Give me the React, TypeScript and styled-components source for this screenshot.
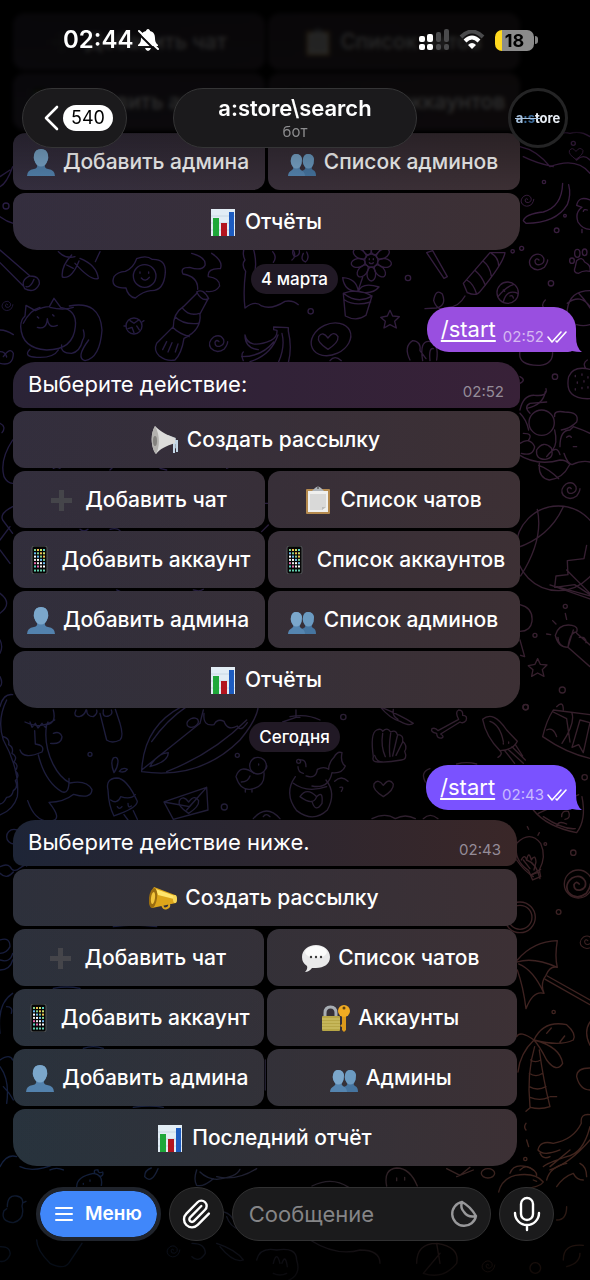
import React from 'react';
import styled, { createGlobalStyle } from 'styled-components';
import { Paperclip } from 'lucide-react';

const GlobalStyle = createGlobalStyle`
  *, *::before, *::after { box-sizing: border-box; }
  body { margin: 0; background: #000; }
  button, input { font: inherit; color: inherit; border: 0; padding: 0; margin: 0; }
  button { cursor: pointer; }
`;

const Screen = styled.div`
  position: relative;
  height: 100vh;
  overflow: hidden;
  display: flex;
  flex-direction: column;
  background: #000;
  color: #fff;
  font-family: Inter, "Liberation Sans", sans-serif;
  font-size: 21px;
  line-height: 28px;
`;

const WallpaperSvg = styled.svg`
  position: absolute;
  inset: 0;
  width: 100%;
  height: 100%;
`;

/* ---------- chat history ---------- */

const History = styled.main`
  position: relative;
  flex: 1;
  min-height: 0;
  display: flex;
  flex-direction: column;
  justify-content: flex-end;
  padding: 0 14px 114px 13px;
`;

const DatePill = styled.div`
  align-self: center;
  margin: 14px 0 13px;
  padding: 0 10px;
  border-radius: 15px;
  background: #211925;
  font-size: 17px;
  font-weight: 500;
  line-height: 30px;
`;

const Outgoing = styled.div<{ $color: string }>`
  position: relative;
  align-self: flex-end;
  display: flex;
  align-items: flex-end;
  gap: 7px;
  height: 45px;
  margin-bottom: 10px;
  padding: 0 9px 8px 14px;
  border-radius: 22px 22px 8px 22px;
  background: ${(p) => p.$color};
`;

const Tail = styled.svg`
  position: absolute;
  right: -6px;
  bottom: 0;
`;

const Command = styled.a`
  color: #fff;
  font-size: 22px;
  line-height: 30px;
  text-decoration: underline;
  text-decoration-thickness: 2px;
  text-underline-offset: 3px;
`;

const Stamp = styled.time<{ $out?: boolean }>`
  font-size: 15px;
  line-height: 15px;
  color: ${(p) => (p.$out ? 'rgba(255,255,255,.6)' : '#958c98')};
`;

const Receipt = styled.span`
  display: flex;
  align-items: flex-end;
  gap: 3px;
`;

const Bubble = styled.div<{ $width: number; $from: string; $to: string }>`
  display: flex;
  justify-content: space-between;
  align-items: flex-end;
  width: 100%;
  max-width: ${(p) => p.$width}px;
  height: 46px;
  margin-bottom: 3px;
  padding: 0 16px 9px 15px;
  border-radius: 22px 22px 10px 10px;
  background: linear-gradient(90deg, ${(p) => p.$from}, ${(p) => p.$to});
`;

const BubbleText = styled.p`
  margin: 0;
  align-self: flex-start;
  font-size: 22px;
  line-height: 44px;
`;

const Keyboard = styled.div<{ $width: number }>`
  display: grid;
  grid-template-columns: 1fr 1fr;
  gap: 3px;
  width: 100%;
  max-width: ${(p) => p.$width}px;
`;

const Key = styled.button<{ $wide?: boolean; $last?: boolean }>`
  grid-column: ${(p) => (p.$wide ? 'span 2' : 'auto')};
  display: flex;
  align-items: center;
  justify-content: center;
  gap: 8px;
  height: 57px;
  padding-right: 2px;
  border-radius: ${(p) => (p.$last ? '12px 12px 24px 24px' : '12px')};
  background:
    linear-gradient(90deg, rgba(61,48,52,0) 2%, #3d3034 92%) fixed,
    linear-gradient(180deg, #352e40 0, #322e3c 500px, #2d303b 900px, #27333d 1160px) fixed;
  font-weight: 500;
  white-space: nowrap;
`;

/* ---------- header ---------- */

const Header = styled.header`
  position: absolute;
  inset: 0 0 auto 0;
  padding-bottom: 44px;
  background: linear-gradient(180deg, rgba(0,0,0,.86) 0, rgba(0,0,0,.8) 131px, rgba(0,0,0,.3) 134px, rgba(0,0,0,0) 100%);

  &::before {
    content: "";
    position: absolute;
    inset: 0 0 60px 0;
    backdrop-filter: blur(2px);
  }
`;

const StatusBar = styled.div`
  position: relative;
  display: flex;
  align-items: center;
  justify-content: space-between;
  height: 80px;
  padding: 0 52px 0 63px;
`;

const StatusGroup = styled.div<{ $gap: number }>`
  display: flex;
  align-items: center;
  gap: ${(p) => p.$gap}px;
`;

const Clock = styled.time`
  font-size: 24px;
  font-weight: 600;
`;

const Battery = styled.span`
  display: flex;
  align-items: center;
  gap: 1px;

  &::after {
    content: "";
    width: 3px;
    height: 8px;
    border-radius: 0 3px 3px 0;
    background: #858585;
  }
`;

const BatteryLevel = styled.span`
  width: 39px;
  height: 21px;
  border-radius: 7px;
  background: linear-gradient(90deg, #ffd91f 7px, #8b8b8b 7px);
  color: #000;
  font-size: 18px;
  font-weight: 700;
  line-height: 21px;
  text-align: center;
`;

const NavBar = styled.nav`
  position: relative;
  display: grid;
  grid-template-columns: 1fr auto 1fr;
  align-items: center;
  margin-top: 8px;
  padding: 0 22px;
`;

const BackButton = styled.button`
  justify-self: start;
  display: flex;
  align-items: center;
  gap: 4px;
  height: 60px;
  padding: 0 13px 0 20px;
  border: 1px solid #353536;
  border-radius: 30px;
  background: #1b1a1c;
`;

const UnreadBadge = styled.span`
  padding: 0 8px;
  border-radius: 13px;
  background: #fff;
  color: #000;
  font-size: 18px;
  line-height: 26px;
`;

const TitleButton = styled.button`
  display: flex;
  flex-direction: column;
  align-items: center;
  width: 244px;
  height: 60px;
  padding-top: 6px;
  border: 1px solid #353536;
  border-radius: 30px;
  background: #1b1a1c;
`;

const Title = styled.span`
  font-size: 22px;
  font-weight: 600;
  line-height: 27px;
`;

const Subtitle = styled.span`
  color: #8d8d8f;
  font-size: 15px;
  line-height: 20px;
`;

const Avatar = styled.button`
  position: relative;
  justify-self: end;
  display: flex;
  align-items: center;
  justify-content: center;
  width: 60px;
  height: 60px;
  border: 3px solid #242425;
  border-radius: 50%;
  background: #000;
  font-size: 13px;
  font-weight: 700;

  &::after {
    content: "";
    position: absolute;
    left: 4px;
    top: 27px;
    width: 25px;
    height: 1px;
    background: #a9c4e0;
  }
`;

const AvatarTint = styled.span<{ $color: string }>`
  color: ${(p) => p.$color};
`;

/* ---------- composer ---------- */

const Composer = styled.form`
  position: absolute;
  inset: auto 0 0 0;
  display: flex;
  gap: 8px;
  padding: 20px 36px 39px;
  background: linear-gradient(180deg, rgba(0,0,0,0), rgba(0,0,0,.75));
`;

const MenuButton = styled.button`
  display: flex;
  align-items: center;
  gap: 12px;
  height: 54px;
  padding: 0 15px;
  border: 4px solid #20242c;
  border-radius: 27px;
  background: #4087fa;
  background-clip: padding-box;
  font-size: 19px;
  font-weight: 600;
`;

const RoundButton = styled.button`
  flex: none;
  display: flex;
  align-items: center;
  justify-content: center;
  width: 55px;
  height: 54px;
  border: 1px solid #313132;
  border-radius: 27px;
  background: #1b1b1c;
`;

const Field = styled.div`
  flex: 1;
  min-width: 0;
  display: flex;
  align-items: center;
  height: 54px;
  padding: 0 12px 0 16px;
  border: 1px solid #313132;
  border-radius: 27px;
  background: #1b1b1c;
`;

const MessageInput = styled.input`
  flex: 1;
  min-width: 0;
  background: none;
  outline: none;
  font-size: 22px;

  &::placeholder { color: #858587; opacity: 1; }
`;

const StickerButton = styled.button`
  display: flex;
  background: none;
`;

/* ---------- emoji ---------- */

type EmojiName = 'loud' | 'horn' | 'plus' | 'board' | 'phone' | 'bust' | 'busts' | 'chart' | 'speech' | 'lock';

const PHONE_DOTS = ['#7fd08a', '#e8e8e8', '#c7e06a', '#6ab8f0', '#e46ab0', '#f0c050', '#fff', '#5ad0c0'];

const emojiArt: Record<EmojiName, React.ReactNode> = {
  loud: (
    <>
      <path d="M17 9 L25 12 V22 L22 24 V17 L17 18Z" fill="#a9b3bb" />
      <path d="M22 14 H27 V26 H25 V18 H24 V27 H22Z" fill="#c3d6e6" />
      <path d="M4 0 C8 4 13 8 24 12 V17 C15 20 9 23 5 28 C0 22 -1 8 4 0Z" fill="#dcdcda" />
      <path d="M4 0 C9 8 9 21 5 28 C0 22 -1 8 4 0Z" fill="#b3b1ae" />
      <ellipse cx="4" cy="15" rx="2" ry="5" fill="#83817e" />
    </>
  ),
  horn: (
    <>
      <path d="M13 20 q1 6 5 4 q3 -1 2 -4" fill="none" stroke="#d9a520" strokeWidth="2" />
      <path d="M5 3 L26 11 Q29 15 27 19 L3 24 Q-2 13 5 3Z" fill="#dda61a" />
      <path d="M7 5 L26 12 L25 15 L9 11Z" fill="#ffe56b" />
      <ellipse cx="4" cy="14" rx="4" ry="10" transform="rotate(8 4 14)" fill="#9a6d10" />
      <ellipse cx="4" cy="14" rx="2" ry="6" transform="rotate(8 4 14)" fill="#f2c53a" />
      <ellipse cx="26" cy="15" rx="2" ry="4" fill="#f8d85a" />
    </>
  ),
  plus: <path d="M10 4 h5 v8 h8 v5 h-8 v8 h-5 v-8 h-8 v-5 h8Z" fill="#45454a" />,
  board: (
    <>
      <rect x="2" y="3" width="24" height="25" rx="1" fill="#b58a4e" />
      <rect x="4" y="5" width="20" height="21" fill="#f0f0ee" />
      <path d="M6 8 H22 V21 L18 24 H6Z" fill="#d9d9d8" />
      <path d="M18 24 V21 H22Z" fill="#bcbcba" />
      <path d="M8 5 L11 2 Q14 -1 17 2 L20 5Z" fill="#aeb4ba" />
      <circle cx="14" cy="2" r="1" fill="#5a5a5a" />
    </>
  ),
  phone: (
    <>
      <rect x="6" y="0" width="15" height="28" rx="2" fill="#060606" stroke="#55585a" strokeWidth="1" />
      {[0, 1, 2, 3, 4, 5].map((r) =>
        [0, 1, 2, 3].map((c) => (
          <rect key={`${r}-${c}`} x={8 + c * 3} y={3 + r * 3.3} width="2" height="2" fill={PHONE_DOTS[(r * 3 + c * 5) % 8]} />
        )),
      )}
      <path d="M8 24.5 h11" stroke="#63cfae" strokeWidth="2" strokeDasharray="2 1" />
    </>
  ),
  bust: (
    <>
      <path d="M0 28 Q0 22 7 21 Q11 20 10 17 Q6 12 7 7 Q8 1 14 1 Q20 1 21 7 Q22 12 18 17 Q17 20 21 21 Q28 22 28 28Z" fill="#5382ad" />
      <path d="M10 17 Q6 12 7 7 Q8 1 14 1 Q20 1 21 7 Q22 12 18 17 Q14 20 10 17Z" fill="#7ba7cb" />
    </>
  ),
  busts: (
    <>
      <path d="M11 28 Q12 23 16 22 Q18 21 17 19 Q14 15 15 11 Q16 6 20 6 Q25 6 26 11 Q26 16 24 19 Q23 21 25 22 Q28 23 28 28Z" fill="#4675a0" />
      <path d="M17 19 Q14 15 15 11 Q16 6 20 6 Q25 6 26 11 Q26 16 24 19 Q20 22 17 19Z" fill="#6c9bc1" />
      <path d="M0 28 Q0 24 4 22 Q6 21 5 19 Q2 15 3 11 Q4 6 8 6 Q13 6 14 11 Q14 16 12 19 Q11 21 13 22 Q17 24 17 28Z" fill="#5585b0" />
      <path d="M5 19 Q2 15 3 11 Q4 6 8 6 Q13 6 14 11 Q14 16 12 19 Q8 22 5 19Z" fill="#7ba7cb" />
    </>
  ),
  chart: (
    <>
      <rect x="2" y="1" width="24" height="27" fill="#e2edf5" />
      <path d="M2 8 H26 M2 15 H26 M2 22 H26" stroke="#c8d8e4" strokeWidth="1" />
      <rect x="4" y="10" width="6" height="18" fill="#1fa83a" />
      <rect x="12" y="15" width="6" height="13" fill="#b3151f" />
      <rect x="20" y="4" width="5" height="24" fill="#1d5cc0" />
    </>
  ),
  speech: (
    <>
      <path d="M14 1 C22 1 28 6 28 13 C28 20 22 24 14 24 C12 24 11 24 10 24 Q7 28 3 28 Q6 25 5 22 Q0 19 0 13 C0 6 6 1 14 1Z" fill="#e9e9ea" />
      <ellipse cx="14" cy="8" rx="11" ry="6" fill="#fbfbfb" />
      <circle cx="9" cy="13" r="1.2" fill="#3b3b3b" />
      <circle cx="14" cy="13" r="1.2" fill="#3b3b3b" />
      <circle cx="19" cy="13" r="1.2" fill="#3b3b3b" />
    </>
  ),
  lock: (
    <>
      <path d="M3 13 V9 Q3 3 8.500 3 Q14 3 14 9 V13" fill="none" stroke="#a7adb3" strokeWidth="3" />
      <rect x="0" y="12" width="18" height="15" rx="1" fill="#b7a646" />
      <path d="M0 15 H18 M0 18 H18 M0 21 H18 M0 24 H18" stroke="#d4c76e" strokeWidth="1" />
      <path d="M20 11 H24 V26 L22 28 L20 26 V23 L18 22 L20 20Z" fill="#dc9a1b" />
      <circle cx="22" cy="7" r="6" fill="#f0ab22" />
      <circle cx="22" cy="4" r="1.5" fill="#5c4211" />
    </>
  ),
};

const Emoji = ({ name }: { name: EmojiName }) => (
  <svg width="28" height="28" viewBox="0 0 28 28" aria-hidden="true">
    {emojiArt[name]}
  </svg>
);

/* ---------- wallpaper doodles ---------- */

const Spiral = ({ x, y, s = 1 }: { x: number; y: number; s?: number }) => (
  <path
    transform={`translate(${x} ${y}) scale(${s})`}
    d="M2 0 q-8 -8 -12 2 q0 14 14 12 q16 -4 12 -20 q-10 -18 -30 -8 q-20 16 -8 34 q18 18 40 2 q10 -14 10 -22"
  />
);
const Heart = ({ x, y, s = 1 }: { x: number; y: number; s?: number }) => (
  <path transform={`translate(${x} ${y}) scale(${s})`} d="M0 26 Q-34 4 -28 -12 Q-16 -30 0 -8 Q18 -32 30 -12 Q32 6 0 26Z" />
);
const Star = ({ x, y }: { x: number; y: number }) => (
  <path transform={`translate(${x} ${y})`} d="M0 -27 L8 -10 L28 -8 L14 6 L19 26 L0 16 L-18 26 L-14 6 L-28 -6 L-8 -10Z" />
);
const Dots = ({ at }: { at: number[][] }) => (
  <>
    {at.map(([x, y, r = 8]) => (
      <circle key={`${x},${y}`} cx={x} cy={y} r={r} />
    ))}
  </>
);

const Wallpaper = () => (
  <WallpaperSvg viewBox="0 0 590 1280" preserveAspectRatio="xMidYMid slice" aria-hidden="true">
    <defs>
      <linearGradient id="cool" gradientUnits="userSpaceOnUse" x1="0" y1="0" x2="0" y2="1280">
        <stop offset="0" stopColor="#2c1c44" />
        <stop offset=".3" stopColor="#241c42" />
        <stop offset=".6" stopColor="#1d1d3c" />
        <stop offset=".8" stopColor="#151d3c" />
        <stop offset="1" stopColor="#12233f" />
      </linearGradient>
      <linearGradient id="warm" gradientUnits="userSpaceOnUse" x1="0" y1="0" x2="0" y2="1280">
        <stop offset="0" stopColor="#3c1c48" />
        <stop offset=".3" stopColor="#361f38" />
        <stop offset=".6" stopColor="#36202a" />
        <stop offset=".8" stopColor="#40231f" />
        <stop offset="1" stopColor="#42261c" />
      </linearGradient>
      <linearGradient id="fade" x1="0" y1="0" x2="1" y2="0">
        <stop offset=".2" stopColor="#000" />
        <stop offset=".9" stopColor="#fff" />
      </linearGradient>
      <mask id="right" maskUnits="userSpaceOnUse" x="0" y="0" width="590" height="1280">
        <rect width="590" height="1280" fill="url(#fade)" />
      </mask>
      <mask id="lines" maskUnits="userSpaceOnUse" x="0" y="0" width="590" height="1280">
        <g fill="none" stroke="#fff" strokeWidth="4" strokeLinecap="round" strokeLinejoin="round">
          <g transform="translate(290 0) scale(.3333)">
            <path d="M690 440 Q740 450 780 500 Q860 470 900 520 M700 470 Q740 490 790 500 M800 420 q10 -30 40 -20 q30 -10 60 10 M860 480 q20 -20 40 0" />
            <Heart x={858} y={460} s={0.7} />
            <Dots at={[[762, 546, 5], [850, 430, 6]]} />
          </g>
          <g transform="translate(0 190) scale(.3333)">
            <path d="M0 -40 L30 -60 M0 -10 q20 -10 38 -60 M0 80 q20 15 40 20 M0 180 L90 258 M0 218 L70 288 M90 258 q30 0 28 24 q-14 30 -44 14 q-14 -26 16 -38 M78 290 q14 4 24 -22" />
            <circle cx="18" cy="48" r="9" />
            <path d="M215 195 q-32 34 -28 66 q28 8 50 -48 M240 205 q50 20 55 60 q-20 10 -70 -45 M175 185 q20 22 50 15 M200 225 l20 10 M300 185 l-14 30" />
            <path d="M410 206 q30 -12 46 2 q42 -2 40 40 q-4 56 -44 54 q-22 2 -46 22 q-22 -4 -28 -30 q-50 0 -36 -34 q10 -14 34 -16 q24 -10 34 -38z" />
            <circle cx="434" cy="258" r="34" />
            <path d="M420 246 v4 M446 246 v4 M424 264 q12 14 24 -2" />
            <path d="M592 308 L550 350 Q520 370 520 410 L470 460 Q460 482 478 498 Q500 515 525 510 Q545 490 552 445 Q605 420 600 372 L625 325 M590 306 q20 -12 36 20 q-20 10 -36 -20 M548 355 q20 25 50 15 M525 380 q25 25 70 20 M518 412 q20 20 50 28 M500 455 l-12 24 M516 458 l-12 28 M534 462 l-8 24" />
            <path d="M575 190 q45 12 40 36 q-10 18 -46 6 q-30 0 -20 20 q46 8 44 46 M635 190 q36 24 26 46 q-40 -2 -36 24 q34 4 34 28 q-12 20 -40 16" />
            <path d="M735 170 q-10 20 0 40 q-12 14 2 34 q-8 60 -2 110 q30 -24 50 -6 q30 12 70 -14 q24 -4 40 10 M760 175 q14 50 0 90 M818 185 q14 16 2 32 M880 180 q10 20 -4 30" />
            <path d="M75 378 L78 346 L106 362 Q130 350 148 350 L162 325 L182 352 Q232 360 226 410 Q220 480 140 480 Q65 475 62 410 Q62 390 75 378 M208 348 Q300 330 306 420 Q300 504 255 512 Q226 504 266 450 M90 478 Q68 500 110 502 Q160 505 175 480 M185 465 Q180 490 215 490 Q240 485 248 450 Q256 440 250 420" />
            <path d="M112 412 q28 8 30 -26 q4 32 30 20 M112 380 l4 4 M158 374 l4 4 M70 400 q20 -40 50 -48 M150 352 q40 10 70 0" />
            <circle cx="402" cy="408" r="24" />
            <path d="M390 392 l12 8 l14 -10 M384 416 l12 -4 l6 16 M418 420 l-8 -12 M372 408 h6 M426 396 l6 -4" />
            <Spiral x={655} y={455} />
            <Spiral x={22} y={344} s={0.6} />
            <path d="M0 420 q20 0 40 14 M10 500 q20 -30 30 -10 q0 40 -40 30 M0 485 q16 0 20 16" />
            <path d="M735 435 q10 45 78 16 q20 -10 18 -30 l-10 -2 v-8 l44 2 v10 q12 50 0 96 M735 435 q0 40 40 44 M725 500 q60 0 96 -44 M730 512 q-8 -20 0 -26 M750 515 q64 -20 84 -80 M846 430 q10 40 -10 85" />
          </g>
          <g transform="translate(290 190) scale(.3333)">
            <circle cx="244" cy="212" r="20" />
            {[0, 40, 80, 120, 160, 200, 240, 280, 320].map((a) => (
              <ellipse key={a} cx="244" cy="172" rx="13" ry="21" transform={`rotate(${a + 20} 244 212)`} />
            ))}
            <path d="M238 206 v3 M250 206 v3 M238 218 q6 6 12 0 M160 310 L166 378 Q200 396 228 376 L246 318 M160 310 q44 -16 86 8 q-44 26 -86 -8 M164 330 q30 20 78 6 M205 305 q-5 -40 -47 -42 q5 42 47 42 q10 -30 62 -14 q-20 24 -62 14 M205 300 L218 262" />
            <path d="M15 170 q-14 20 0 30 q20 -4 10 -30 M40 190 q-10 20 6 26 q14 -10 4 -30" />
            <Star x={300} y={388} />
            <ellipse cx="123" cy="448" rx="62" ry="46" transform="rotate(-25 123 448)" />
            <Heart x={114} y={452} />
            <path d="M120 512 q14 -18 34 0" />
            <path d="M410 188 L462 265 L472 260 L428 182 Z" />
            <path d="M520 280 L600 188 L645 188 Q640 220 570 305 Q560 320 532 308 Z M530 270 q20 10 30 42 M556 242 q20 16 30 44 M580 214 q20 16 24 44 M604 190 q20 10 22 36 M525 318 q-18 32 -50 34 q-32 16 -44 -20 q6 -38 26 -20 q14 34 -18 42 l-34 2" />
            <circle cx="653" cy="308" r="32" />
            <path d="M624 320 q24 -30 46 -36 M640 336 q10 -40 44 -26 M640 300 l4 4 M660 318 q8 -4 10 6" />
            <Spiral x={712} y={28} s={0.7} />
            <Spiral x={745} y={210} />
            <path d="M700 92 q6 -20 60 -26 q56 -16 58 -86 M708 100 q90 0 124 -56 q12 -30 4 -60 M700 92 l8 8" />
            <path d="M900 30 q-34 -14 -40 16 l16 6 q-22 16 -12 44 q14 22 36 22 M876 118 v10 M892 60 q-10 -4 -12 4" />
            <Dots at={[[800, 121, 7], [783, 280, 8], [354, 264, 8], [62, 364, 8], [825, 77, 4], [695, 175, 6], [795, 560, 8], [668, 184, 5]]} />
            <ellipse cx="862" cy="190" rx="8" ry="12" />
            <ellipse cx="884" cy="187" rx="7" ry="10" />
            <ellipse cx="846" cy="212" rx="7" ry="8" />
            <path d="M860 212 q16 -14 24 4 q20 10 16 28 q-20 -4 -34 6 q-18 0 -10 -20 z" />
            <path d="M900 302 q-60 0 -68 56 q-4 30 10 46 M832 340 q40 -30 68 10 M860 404 q20 6 40 0 M866 310 q20 20 34 44 M766 330 q-20 20 10 34" />
            <path d="M360 510 q-20 -40 8 -58 q26 2 22 30 l18 24 M398 512 q-10 -60 20 -58 q30 6 22 56 M420 512 q-4 -40 10 -36" />
            <path d="M690 484 q-8 44 60 42 q38 -4 38 -38 M892 510 q-16 10 -4 26 M836 560 q14 -34 64 -22 M836 560 q-14 70 64 66" />
            <path d="M856 556 v4 M876 552 v4 M862 576 v4 M882 572 v4 M856 596 v4 M876 592 v4 M894 590 v4 M894 560 v4" />
            <path d="M690 560 q20 10 0 20 M690 660 q10 -46 44 -44 q40 4 34 -20 M710 655 q50 -10 56 -50" />
          </g>
          <g transform="translate(260 400) scale(.3333)">
            <circle cx="845" cy="68" r="38" />
            <path d="M810 40 q-20 -20 0 -30 l50 -4 M780 40 q20 20 26 50 M884 50 q-4 -20 30 -14 q46 0 36 30 q-20 20 -46 24 M780 130 q30 -20 44 10 q-4 30 -40 20 M830 150 q20 -30 44 -6 q10 30 -18 34 q-30 0 -26 -28 M860 170 q30 -40 40 -6 M790 100 q30 0 16 20 M884 90 q10 40 -6 60" />
            <path d="M900 140 q0 -50 30 -50 l10 -10 q30 10 50 20 M912 160 q10 30 24 34 q30 -14 54 -8 M920 112 q10 -8 14 0 M940 140 h10 M770 160 q60 40 130 20 q20 0 30 14 M838 190 q-4 44 30 50 q40 -4 60 -44 M836 196 q30 10 60 40" />
            <Spiral x={932} y={266} />
            <circle cx="895" cy="445" r="127" />
            <path d="M832 328 q20 90 -50 200 M910 320 q-40 90 -140 124 M980 436 l-8 40 l-50 6 l2 42 l-36 4 l-4 34 l60 -8 l46 30 M890 560 l100 28 M870 555 l120 42 M920 510 l70 70" />
            <path d="M780 614 q40 10 36 50 q-4 30 -36 30 M780 720 l14 50 l-12 -4 M894 712 q0 30 30 30 L990 800 M924 742 L940 690 M886 706 q10 -36 50 -30 q20 4 14 20 q-20 0 -26 46 q-30 0 -38 -36 M950 700 L990 735 M958 712 q20 -4 20 16 M878 662 l10 10 M916 640 l4 18 M860 702 l12 2" />
            <Star x={833} y={803} />
            <Dots at={[[916, 619, 6], [825, 706, 6], [907, 870, 9], [797, 922, 8]]} />
          </g>
          <g transform="translate(0 400) scale(.3333)">
            <path d="M0 70 q20 10 6 28 M38 120 q-40 60 -26 110 q10 20 26 20 M38 320 q-40 20 -30 40 L38 400 M0 420 L30 380 M0 450 l30 40 M0 580 q40 30 0 60 M0 720 q10 20 0 40 M0 830 q10 20 0 30 M0 920 q10 -40 38 -36" />
            <path d="M160 205 q10 -6 20 0 M240 388 q12 10 24 0 M330 210 l10 -10 M480 205 l20 5 M785 395 l20 -20 M330 388 q20 -6 30 4 M350 570 l10 4 M580 570 q20 6 30 -2 M790 310 h14 M680 205 l20 -10" />
          </g>
          <g transform="translate(0 700) scale(.3333)">
            <path d="M20 0 Q-10 60 10 120 Q60 210 52 290 Q40 330 0 345 M75 66 Q120 90 164 60 M90 66 l6 16 l10 -12 l8 14 l12 -14 l10 12 l8 -16 M160 30 q10 40 -20 44 q-10 60 20 120 q20 40 50 55 q50 -10 66 20 q-2 30 -55 14 q-30 24 -74 24 q40 50 10 55 q-50 10 -74 -60 M60 150 q10 30 66 6 q10 -20 -20 -24 l-2 -40 M160 100 q20 -8 26 10 q-2 24 -34 20 M115 165 q20 80 70 110 q24 10 22 -40 M10 110 q20 6 16 24 q16 8 10 26 q18 10 6 26 q16 10 4 26 q16 14 0 30 q10 20 -6 30 q-4 20 -20 20 q-10 20 -20 20" />
            <path d="M228 30 q-10 20 10 20 q16 -4 20 -20 M260 30 q0 20 20 20 q14 -10 10 -20 M310 30 q-4 24 16 18 q14 -6 8 -18 M300 40 l20 80 q16 12 40 0 q12 -10 0 -50 l-14 -42" />
            <path d="M425 215 Q430 80 545 20 M425 215 Q600 240 720 120 Q770 60 775 20 M425 210 L600 70 L610 30 M500 215 Q640 160 740 60 M455 125 Q500 60 560 20 M450 200 q20 -40 55 -42 q0 26 -55 42" />
            <ellipse cx="578" cy="68" rx="18" ry="13" transform="rotate(-25 578 68)" />
            <path d="M612 40 q-4 40 30 34 q10 -20 30 -10 q10 30 40 14 q10 20 30 -10" />
            <path d="M340 174 q12 -6 14 8 q0 20 -12 36 q-12 -30 -2 -44 M358 214 q10 -14 24 -6 q-8 12 -24 6 M324 270 q-8 -34 26 -36 q30 0 62 70 q0 20 -70 44 q-16 -30 -18 -78 M332 300 q20 14 30 -10 q30 10 44 -6 M372 344 l12 16 M400 332 l12 26 M352 320 q6 10 14 0 M384 310 q0 16 10 8" />
            <path d="M492 306 L620 262 L624 330 L520 358 Z M492 306 L568 320 L620 262 M620 262 L560 330" />
            <Heart x={566} y={314} />
            <circle cx="774" cy="197" r="25" />
            <path d="M762 220 Q720 190 708 230 Q720 270 750 268 Q796 262 792 218 M724 246 q20 0 26 -18 M776 192 v3 M796 208 q6 -4 4 -12 M736 268 v8 M756 268 v8" />
            <path d="M760 356 q40 -46 80 0 M790 350 q8 -12 20 0 M848 66 l40 -14 h12 M888 30 v20" />
            <Dots at={[[270, 163, 6], [673, 321, 9], [712, 166, 6], [896, 184, 6], [42, 410, 22]]} />
            <path d="M0 500 q20 -10 30 0 q10 20 30 4 q20 -14 20 -6 M0 520 q20 20 40 -4" />
          </g>
          <g transform="translate(290 700) scale(.3333)">
            <Dots at={[[160, 51], [707, 21], [884, 232], [850, 458], [766, 432, 4]]} />
            <path d="M0 50 q50 -10 90 10 M270 20 q70 30 100 50 q-10 10 -40 -6 q-30 -8 -60 -44 M310 28 q-4 20 14 30" />
            <path d="M250 170 q-10 -70 10 -80 q14 -6 18 4 q14 -14 24 2 q16 -8 20 8 q20 0 16 20 q16 14 6 30 q10 24 -10 26 q-40 8 -70 6 q-20 0 -14 -16 M278 100 q-6 40 8 70 M302 100 q-6 40 -2 70 M322 108 l-14 60 M338 126 l-20 40 M254 166 q6 20 24 20" />
            <path d="M444 92 L506 58 Q494 36 506 30 Q520 30 518 46 Q534 46 528 62 Q520 72 510 66 L452 102 Q464 110 456 114 Q440 116 440 100 Q420 96 426 86 Q436 82 444 92" />
            <path d="M578 58 Q610 30 650 90 L682 124 Q670 150 630 152 Q588 110 578 58 M600 64 q30 10 40 60 M630 152 q10 10 -6 20 M644 152 l30 38 M654 148 l46 42 M666 140 l40 40 M676 134 l22 34 M640 128 v4 M656 126 v4" />
            <path d="M758 110 Q770 60 790 30 L900 44 M758 110 Q830 160 900 175 M800 20 q20 -20 20 10 M846 40 q10 30 -30 90 M790 36 l40 20 l10 70 M770 90 q20 -10 30 20 M870 60 l30 8 l-20 90 l-14 -24 l-20 8 z" />
            <path d="M28 180 q20 -4 20 20 M24 200 q0 16 16 20 M48 228 q30 10 34 -20 q20 -10 34 0 q0 -20 16 -36 q10 -20 24 -14 q-6 30 10 40 q-10 24 -40 20 q-10 50 -60 40 M134 244 q20 -20 40 0 M150 262 q14 -4 4 12" />
            <path d="M16 230 Q-20 280 20 332 Q70 370 112 330 Q140 280 108 240 M10 250 q40 30 100 10 M30 290 q20 -30 50 0 q-10 30 -50 0 M80 290 q20 -20 16 20 q-20 30 -30 -6" />
            <Heart x={280} y={264} />
            <path d="M406 246 q-16 -30 14 -40 M500 192 q30 -8 60 0 M246 356 q40 -20 70 0 q30 -16 60 0 M400 356 q20 -20 44 0" />
            <path d="M730 330 Q770 380 860 398 Q890 360 876 290 M745 340 L866 284 M760 350 q60 40 96 36 M815 350 q0 -20 20 -16 q10 20 -10 24 M800 380 q4 -20 30 -8" />
            <path d="M680 430 Q720 390 752 430 Q770 470 748 510 L752 530 L728 540 L716 512 Q670 480 680 430 M700 480 l20 26 M694 480 q10 -20 16 0 q6 -30 14 0 q12 -20 14 6 l-6 24 M712 380 l4 8 M748 398 l-4 8 M664 390 l6 6 M724 524 l26 -8" />
          </g>
          <g transform="translate(260 860) scale(.3333)">
            <path d="M770 0 q20 30 50 50 M812 46 l30 -18 M800 0 q30 10 40 56" />
            <Spiral x={955} y={72} s={1.3} />
            <circle cx="955" cy="72" r="42" />
            <circle cx="780" cy="172" r="36" />
            <circle cx="780" cy="172" r="46" />
            <Spiral x={982} y={242} s={0.8} />
            <path d="M772 300 Q820 244 892 242 Q884 290 892 322 Q870 316 858 346 Q840 370 852 400 Q820 390 798 446 Q790 380 772 330 M892 322 Q820 290 772 306 M852 400 Q820 330 776 312 M862 348 L990 420 M856 358 L990 434" />
            <Dots at={[[896, 156, 7], [881, 456, 5], [796, 897, 5]]} />
            <path d="M822 540 Q850 480 920 494 Q950 520 940 540 Q900 560 822 540 Q900 560 908 610 Q890 640 860 600 Q840 560 822 540 Q780 580 774 636 M822 540 Q780 510 770 530 M824 560 Q800 640 810 740 M838 570 Q850 660 870 740 Q840 750 812 742 M812 600 q14 10 30 0 M808 640 q20 14 40 0 M808 680 q24 14 50 0 M810 712 q30 12 56 0 M870 710 h20 M812 742 l-14 12 M860 520 l14 -16 M900 546 l14 -18" />
            <path d="M990 486 q-20 30 0 70 M990 624 q-40 0 -40 26 q10 40 40 40 M798 790 q-8 10 0 20 M800 840 l6 20" />
            <path d="M990 764 Q960 760 964 790 Q940 840 880 850 Q840 840 834 870 Q850 890 900 870 M990 800 Q970 880 920 890 Q860 910 850 920 M990 840 q-60 70 -120 90 M840 880 q10 20 30 10 M930 870 l-60 50 M780 930 q20 -20 40 0" />
          </g>
          <g transform="translate(0 860) scale(.3333)">
            <path d="M0 240 q30 -10 30 20 q-10 20 -30 20 M0 300 q30 10 38 -20 M0 330 q30 0 38 -30 M38 400 Q-10 430 0 520 M20 440 q20 0 14 20 M0 600 q30 -20 38 0 M0 620 q30 40 20 110 M10 680 q20 20 30 40 M0 920 q20 -40 50 -30 M150 930 q20 -10 40 0 M340 200 q60 -10 130 0 M160 385 q40 -8 80 0 M250 565 q30 -10 60 0 M400 742 q50 -8 90 0 M790 250 v80 M796 600 v90" />
          </g>
          <g transform="translate(0 1160) scale(.3333)">
            <path d="M60 20 q40 20 110 -10 M434 50 q0 -20 20 -26 M434 50 q20 24 40 -24 M590 30 q-10 30 0 46 q20 6 50 -20 M600 36 q20 20 50 22 q60 -6 70 -30 M650 50 q60 14 120 -24 M230 80 q0 -30 50 -40 q30 4 24 36 M270 60 v4 M250 70 v3 M284 38 q-4 -10 10 -8 q0 12 14 6 q4 12 -10 14" />
            <path d="M22 140 q0 -36 28 -32 q24 4 16 30 q10 40 -26 50 q-40 -4 -28 -36 l8 -6 M70 128 l8 -4 M110 240 q0 30 40 70 q40 20 56 0 l40 -60 M0 260 q34 0 30 24 q-10 24 -30 20" />
            <Spiral x={520} y={270} s={0.7} />
            <path d="M576 250 q40 0 40 30 q-20 30 -40 10 M650 250 q60 20 80 50 q-30 10 -70 -40 M770 300 q10 -40 60 -30 q60 -10 60 30 q20 60 -60 70 M820 310 q10 -40 20 0 M846 310 q10 -30 16 10 M820 340 q20 10 40 0 M640 160 q50 -20 70 40 M680 170 q10 30 40 40" />
          </g>
          <g transform="translate(290 1160) scale(.3333)">
            <path d="M66 78 q60 -30 110 4 M290 78 q-10 -50 30 -54 q40 0 62 54 M320 54 v8 M344 52 v8 M470 26 l40 20 l30 -24 M500 50 l50 -20 M660 40 q10 -30 50 -20 q30 10 30 26 M626 96 q10 -40 50 -50 q60 -10 84 20 q-10 16 -60 20 M770 60 q10 -40 60 -50 M800 80 q20 -30 50 -40 q10 20 30 20 M870 10 q20 10 20 40 M730 60 l10 4" />
            <ellipse cx="594" cy="40" rx="20" ry="14" />
            <path d="M60 240 q80 50 150 30 q60 0 60 40 M380 310 q0 -60 60 -60 q70 10 60 60 q-40 50 -100 30 M400 340 l50 -60 M440 250 l10 60 M800 180 q30 0 30 -40 M820 300 q0 -50 60 -44 M830 320 q40 -10 40 -40" />
            <Spiral x={595} y={315} s={0.7} />
            <Dots at={[[736, 324, 16]]} />
          </g>
        </g>
      </mask>
    </defs>
    <g mask="url(#lines)">
      <rect width="590" height="1280" fill="url(#cool)" />
      <rect width="590" height="1280" fill="url(#warm)" mask="url(#right)" />
    </g>
  </WallpaperSvg>
);

/* ---------- icons ---------- */

const BellOff = () => (
  <svg width="22" height="22" viewBox="0 0 22 22" aria-hidden="true">
    <path d="M11 0 C12 0 13 1 13 2 C17 3 18 6 18 9 C18 13 19 14 21 16 V17 H1 V16 C3 14 4 13 4 9 C4 6 5 3 9 2 C9 1 10 0 11 0Z M8 19 H14 Q13 22 11 22 Q9 22 8 19Z" fill="#fff" />
    <path d="M0 3 L19 22" stroke="#0b0a0c" strokeWidth="2" />
    <path d="M2 2 L21 20" stroke="#fff" strokeWidth="2" strokeLinecap="round" />
  </svg>
);

const Signal = () => (
  <svg width="30" height="22" viewBox="0 0 30 22" aria-hidden="true">
    <g fill="#fff">
      <rect x="0" y="7" width="6" height="6" rx="2" />
      <rect x="0" y="15" width="6" height="6" rx="2" />
      <rect x="8" y="5" width="6" height="8" rx="2" />
      <rect x="8" y="15" width="6" height="6" rx="2" />
    </g>
    <g fill="#4a4a4c">
      <rect x="17" y="3" width="5" height="10" rx="2" />
      <rect x="17" y="15" width="5" height="6" rx="2" />
      <rect x="25" y="0" width="5" height="13" rx="2" />
      <rect x="25" y="15" width="5" height="6" rx="2" />
    </g>
  </svg>
);

const Wifi = () => (
  <svg width="26" height="20" viewBox="0 0 26 20" fill="none" aria-hidden="true">
    <path d="M2 7 Q13 -4 24 7" stroke="#4a4a4c" strokeWidth="4" />
    <path d="M6 11 Q13 4 20 11" stroke="#fff" strokeWidth="4" />
    <path d="M13 19 L9 15 Q13 11 17 15Z" fill="#fff" />
  </svg>
);

const ChevronBack = () => (
  <svg width="16" height="26" viewBox="0 0 16 26" fill="none" aria-hidden="true">
    <path d="M14 2 L3 13 L14 24" stroke="#fff" strokeWidth="2.600" strokeLinecap="round" strokeLinejoin="round" />
  </svg>
);

const DoubleCheck = () => (
  <svg width="20" height="14" viewBox="0 0 20 14" fill="none" stroke="#fff" strokeWidth="1.600" strokeLinecap="round" strokeLinejoin="round" aria-hidden="true">
    <path d="M1 7 L5 12 L14 2 M9 11 L10 12 L19 2" />
  </svg>
);

const MenuLines = () => (
  <svg width="18" height="16" viewBox="0 0 18 16" stroke="#fff" strokeWidth="2" strokeLinecap="round" aria-hidden="true">
    <path d="M1 2 H17 M1 8 H17 M1 14 H17" />
  </svg>
);

const StickerIcon = () => (
  <svg width="28" height="28" viewBox="0 0 28 28" fill="none" stroke="#98989a" strokeWidth="2.400" strokeLinejoin="round" strokeLinecap="round" aria-hidden="true">
    <path d="M12 2 A12 12 0 1 0 26 16 Q20 6 12 2Z M12 2 Q10 8 14 12 Q18 18 26 16" />
  </svg>
);

const MicIcon = () => (
  <svg width="28" height="36" viewBox="0 0 28 36" fill="none" stroke="#fff" strokeWidth="2.400" strokeLinecap="round" aria-hidden="true">
    <rect x="8" y="2" width="12" height="22" rx="6" />
    <path d="M2 17 A12 12 0 0 0 26 17 M14 29 V34" />
  </svg>
);

/* ---------- data ---------- */

type KeySpec = { icon: EmojiName; label: string; wide?: boolean };

const adminKeys: KeySpec[] = [
  { icon: 'loud', label: 'Создать рассылку', wide: true },
  { icon: 'plus', label: 'Добавить чат' },
  { icon: 'board', label: 'Список чатов' },
  { icon: 'phone', label: 'Добавить аккаунт' },
  { icon: 'phone', label: 'Список аккаунтов' },
  { icon: 'bust', label: 'Добавить админа' },
  { icon: 'busts', label: 'Список админов' },
  { icon: 'chart', label: 'Отчёты', wide: true },
];

const currentKeys: KeySpec[] = [
  { icon: 'horn', label: 'Создать рассылку', wide: true },
  { icon: 'plus', label: 'Добавить чат' },
  { icon: 'speech', label: 'Список чатов' },
  { icon: 'phone', label: 'Добавить аккаунт' },
  { icon: 'lock', label: 'Аккаунты' },
  { icon: 'bust', label: 'Добавить админа' },
  { icon: 'busts', label: 'Админы' },
  { icon: 'chart', label: 'Последний отчёт', wide: true },
];

const InlineKeyboard = ({ keys, width }: { keys: KeySpec[]; width: number }) => (
  <Keyboard $width={width}>
    {keys.map((k, i) => (
      <Key key={k.label} type="button" $wide={k.wide} $last={i === keys.length - 1}>
        <Emoji name={k.icon} />
        {k.label}
      </Key>
    ))}
  </Keyboard>
);

const OutgoingCommand = ({ color, time }: { color: string; time: string }) => (
  <Outgoing $color={color}>
    <Command href="#start">/start</Command>
    <Receipt>
      <Stamp $out>{time}</Stamp>
      <DoubleCheck />
    </Receipt>
    <Tail width="16" height="16" viewBox="0 0 16 16" aria-hidden="true">
      <path d="M0 12 Q4 16 16 16 Q10 12 10 0 H0Z" fill={color} />
    </Tail>
  </Outgoing>
);

export default function App() {
  return (
    <Screen>
      <GlobalStyle />
      <Wallpaper />

      <History>
        <InlineKeyboard keys={adminKeys.slice(1)} width={507} />

        <DatePill>4 марта</DatePill>
        <OutgoingCommand color="#994fe0" time="02:52" />
        <Bubble $width={507} $from="#2a2336" $to="#382138">
          <BubbleText>Выберите действие:</BubbleText>
          <Stamp>02:52</Stamp>
        </Bubble>
        <InlineKeyboard keys={adminKeys} width={507} />

        <DatePill>Сегодня</DatePill>
        <OutgoingCommand color="#7a52ff" time="02:43" />
        <Bubble $width={504} $from="#1e2537" $to="#3a2728">
          <BubbleText>Выберите действие ниже.</BubbleText>
          <Stamp>02:43</Stamp>
        </Bubble>
        <InlineKeyboard keys={currentKeys} width={504} />
      </History>

      <Header>
        <StatusBar>
          <StatusGroup $gap={4}>
            <Clock>02:44</Clock>
            <BellOff />
          </StatusGroup>
          <StatusGroup $gap={10}>
            <Signal />
            <Wifi />
            <Battery>
              <BatteryLevel>18</BatteryLevel>
            </Battery>
          </StatusGroup>
        </StatusBar>
        <NavBar>
          <BackButton type="button" aria-label="Назад">
            <ChevronBack />
            <UnreadBadge>540</UnreadBadge>
          </BackButton>
          <TitleButton type="button">
            <Title>a:store\search</Title>
            <Subtitle>бот</Subtitle>
          </TitleButton>
          <Avatar type="button">
            <AvatarTint $color="#a9c4e0">a</AvatarTint>
            <AvatarTint $color="#3e6d9c">:s</AvatarTint>
            <AvatarTint $color="#e8eef5">tore</AvatarTint>
          </Avatar>
        </NavBar>
      </Header>

      <Composer onSubmit={(e) => e.preventDefault()}>
        <MenuButton type="button">
          <MenuLines />
          Меню
        </MenuButton>
        <RoundButton type="button" aria-label="Прикрепить">
          <Paperclip size={32} strokeWidth={1.8} />
        </RoundButton>
        <Field>
          <MessageInput type="text" placeholder="Сообщение" aria-label="Сообщение" />
          <StickerButton type="button" aria-label="Стикеры">
            <StickerIcon />
          </StickerButton>
        </Field>
        <RoundButton type="button" aria-label="Голосовое сообщение">
          <MicIcon />
        </RoundButton>
      </Composer>
    </Screen>
  );
}
